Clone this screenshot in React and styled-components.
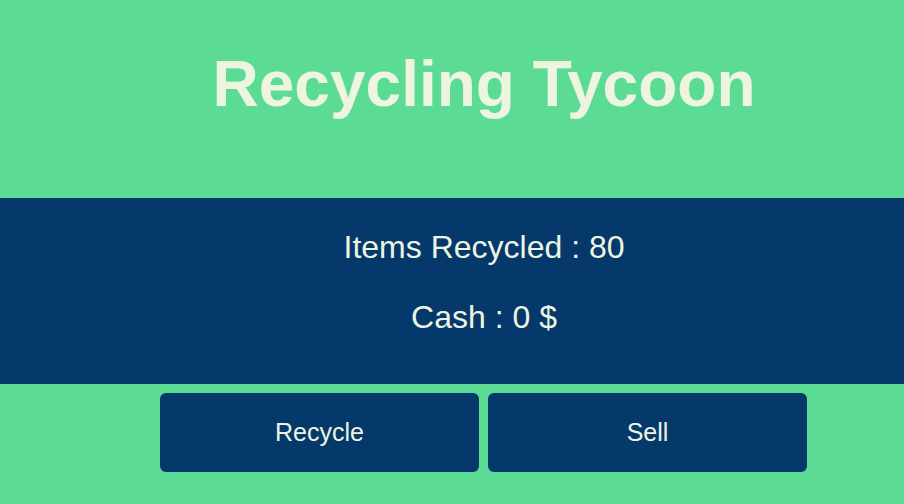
import React, { useState } from "react";
import styled, { createGlobalStyle } from "styled-components";

const Global = createGlobalStyle`
  html, body { margin: 0; padding: 0; background: #5cdb95; }
  body { font-family: "Liberation Sans", Arial, sans-serif; }
`;

const Page = styled.div`
  width: 904px;
  height: 504px;
  background: #5cdb95;
  display: flex;
  flex-direction: column;
  overflow: hidden;
`;

const Header = styled.header`
  height: 198px;
  box-sizing: border-box;
  padding: 47px 0 0 64px;
  display: flex;
  justify-content: center;
  align-items: flex-start;
`;

const Title = styled.h1`
  margin: 0;
  font-size: 64px;
  line-height: 74px;
  font-weight: 700;
  color: #edf5e1;
`;

const Band = styled.section`
  height: 186px;
  background: #05386b;
  box-sizing: border-box;
  padding: 31px 0 0 64px;
  display: flex;
  flex-direction: column;
  align-items: center;
  gap: 33px;
`;

const Stat = styled.p`
  margin: 0;
  font-size: 32px;
  line-height: 37px;
  color: #edf5e1;
`;

const Actions = styled.div`
  padding: 9px 0 0 63px;
  display: flex;
  justify-content: center;
  gap: 9px;
`;

const Button = styled.button`
  width: 319px;
  height: 79px;
  border: none;
  border-radius: 6px;
  background: #05386b;
  color: #edf5e1;
  font-family: "Liberation Sans", Arial, sans-serif;
  font-size: 25px;
  cursor: pointer;
  padding: 0;
`;

export default function App() {
  const [items, setItems] = useState(80);
  const [cash, setCash] = useState(0);
  return (
    <>
      <Global />
      <Page>
        <Header>
          <Title>Recycling Tycoon</Title>
        </Header>
        <Band>
          <Stat>Items Recycled : {items}</Stat>
          <Stat>Cash : {cash} $</Stat>
        </Band>
        <Actions>
          <Button onClick={() => setItems(items + 1)}>Recycle</Button>
          <Button
            onClick={() => {
              setCash(cash + items);
              setItems(0);
            }}
          >
            Sell
          </Button>
        </Actions>
      </Page>
    </>
  );
}
